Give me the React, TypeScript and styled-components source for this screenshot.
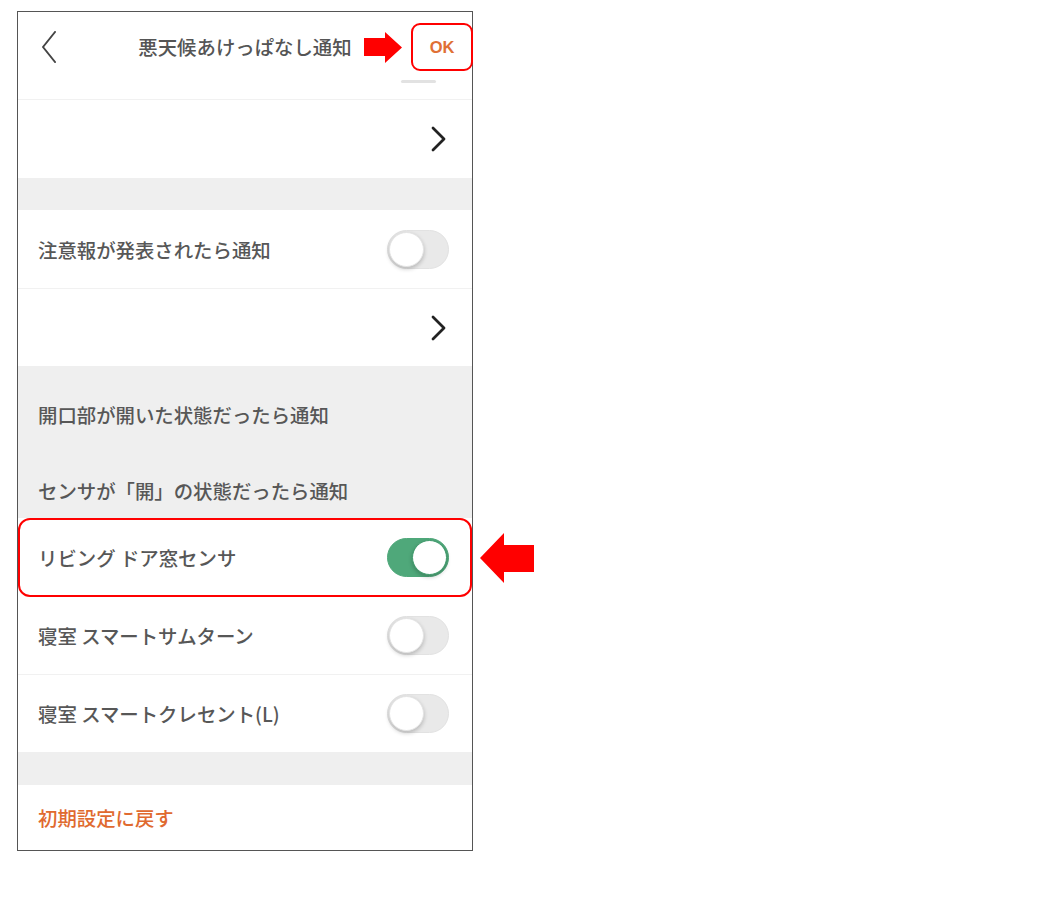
import styled, { createGlobalStyle } from 'styled-components';

const GlobalStyle = createGlobalStyle`
    body {
        margin: 0;
        background: #ffffff;
        font-family: "Noto Sans CJK JP", "Noto Sans", sans-serif;
    }
`;

const Page = styled.div`
    padding: 11px 0 0 17px;
`;

const Frame = styled.div`
    position: relative;
    width: 456px;
    box-sizing: border-box;
    border: 1px solid #555555;
    background: #ffffff;
    display: flex;
    flex-direction: column;
`;

const Header = styled.div`
    position: relative;
    height: 88px;
    box-sizing: border-box;
    padding: 11px 0 0 0;
    border-bottom: 1px solid #f1f1f1;
    display: grid;
    grid-template-columns: 1fr auto 1fr;
    align-items: start;
`;

const BackButton = styled.div`
    height: 48px;
    padding-left: 23px;
    display: flex;
    align-items: center;
`;

const Title = styled.div`
    height: 48px;
    line-height: 48px;
    font-size: 19.4px;
    font-weight: 500;
    color: #555555;
    white-space: nowrap;
`;

const HeaderRight = styled.div`
    display: flex;
    justify-content: flex-end;
    align-items: center;
    gap: 9px;
    margin-right: -1px;
`;

const OkBox = styled.div`
    width: 62px;
    height: 48px;
    box-sizing: border-box;
    border: 2px solid #ff0000;
    border-radius: 9px;
    display: flex;
    align-items: center;
    justify-content: center;
    color: #e07035;
    font-family: "Liberation Sans", Arial, sans-serif;
    font-weight: 700;
    font-size: 16.5px;
`;

const HiddenBar = styled.div`
    position: absolute;
    right: 36px;
    top: 68px;
    width: 35px;
    height: 3px;
    border-radius: 2px;
    background: #e2e2e2;
`;

const Row = styled.div<{ $h: number; $line?: boolean }>`
    height: ${(p) => p.$h}px;
    box-sizing: border-box;
    padding: 0 23px 0 20px;
    display: flex;
    align-items: center;
    justify-content: space-between;
    border-bottom: ${(p) => (p.$line ? '1px solid #f1f1f1' : 'none')};
`;

const LinkRow = styled(Row)`
    justify-content: flex-end;
    padding-right: 25px;
`;

const HighlightRow = styled.div`
    position: relative;
    height: 79px;
    box-sizing: border-box;
    padding: 0 21px 0 18px;
    border: 2px solid #ff0000;
    border-radius: 12px;
    display: flex;
    align-items: center;
    justify-content: space-between;
`;

const Label = styled.span<{ $accent?: boolean }>`
    font-size: 19.4px;
    font-weight: 500;
    color: ${(p) => (p.$accent ? '#e06a2f' : '#575757')};
    white-space: nowrap;
`;

const Gap = styled.div<{ $h: number }>`
    height: ${(p) => p.$h}px;
    background: #efefef;
`;

const GraySection = styled.div`
    background: #efefef;
    padding: 20px 0 0 0;
    display: flex;
    flex-direction: column;
    gap: 20px;
    height: 152px;
    box-sizing: border-box;
`;

const GrayRow = styled.div`
    height: 56px;
    padding-left: 20px;
    display: flex;
    align-items: center;
`;

const Track = styled.span<{ $on?: boolean }>`
    width: 62px;
    height: 39px;
    box-sizing: border-box;
    border-radius: 20px;
    padding: 1px;
    display: flex;
    justify-content: ${(p) => (p.$on ? 'flex-end' : 'flex-start')};
    background: ${(p) => (p.$on ? '#4fa87a' : '#e9e9e9')};
    border: 1px solid ${(p) => (p.$on ? '#4fa87a' : '#e2e2e2')};
`;

const Knob = styled.span<{ $on?: boolean }>`
    width: 35px;
    height: 35px;
    border-radius: 50%;
    background: #ffffff;
    box-sizing: border-box;
    border: 1px solid ${(p) => (p.$on ? '#3f9a6b' : '#e4e4e4')};
    box-shadow: 0 2px 4px rgba(0, 0, 0, 0.22);
`;

const SideArrow = styled.svg`
    position: absolute;
    left: calc(100% + 10px);
    top: 13px;
`;

const Toggle = ({ on }: { on?: boolean }) => (
    <Track $on={on}>
        <Knob $on={on} />
    </Track>
);

const Chevron = () => (
    <svg width="16" height="26" viewBox="0 0 16 26">
        <polyline points="2,2 13,13 2,24" fill="none" stroke="#222222" strokeWidth="2.8" strokeLinecap="round" strokeLinejoin="round" />
    </svg>
);

const App = () => {
    return (
        <Page>
            <GlobalStyle />
            <Frame>
                <Header>
                    <BackButton>
                        <svg width="16" height="32" viewBox="0 0 16 32">
                            <polyline points="14,1 2,16 14,31" fill="none" stroke="#444444" strokeWidth="2" strokeLinecap="round" strokeLinejoin="round" />
                        </svg>
                    </BackButton>
                    <Title>悪天候あけっぱなし通知</Title>
                    <HeaderRight>
                        <svg width="38" height="31" viewBox="0 0 38 31">
                            <polygon points="0,6 21,6 21,0 38,15.5 21,31 21,24 0,24" fill="#ff0000" />
                        </svg>
                        <OkBox>OK</OkBox>
                    </HeaderRight>
                    <HiddenBar />
                </Header>

                <LinkRow $h={78}>
                    <Chevron />
                </LinkRow>
                <Gap $h={32} />
                <Row $h={79} $line>
                    <Label>注意報が発表されたら通知</Label>
                    <Toggle />
                </Row>
                <LinkRow $h={77}>
                    <Chevron />
                </LinkRow>

                <GraySection>
                    <GrayRow>
                        <Label>開口部が開いた状態だったら通知</Label>
                    </GrayRow>
                    <GrayRow>
                        <Label>センサが「開」の状態だったら通知</Label>
                    </GrayRow>
                </GraySection>

                <HighlightRow>
                    <Label>リビング ドア窓センサ</Label>
                    <Toggle on />
                    <SideArrow width="54" height="50" viewBox="0 0 54 50">
                        <polygon points="0,25 24,0 24,12 54,12 54,39 24,39 24,50" fill="#ff0000" />
                    </SideArrow>
                </HighlightRow>
                <Row $h={78} $line>
                    <Label>寝室 スマートサムターン</Label>
                    <Toggle />
                </Row>
                <Row $h={77}>
                    <Label>寝室 スマートクレセント(L)</Label>
                    <Toggle />
                </Row>
                <Gap $h={33} />
                <Row $h={65}>
                    <Label $accent>初期設定に戻す</Label>
                </Row>
            </Frame>
        </Page>
    );
};

export default App;
